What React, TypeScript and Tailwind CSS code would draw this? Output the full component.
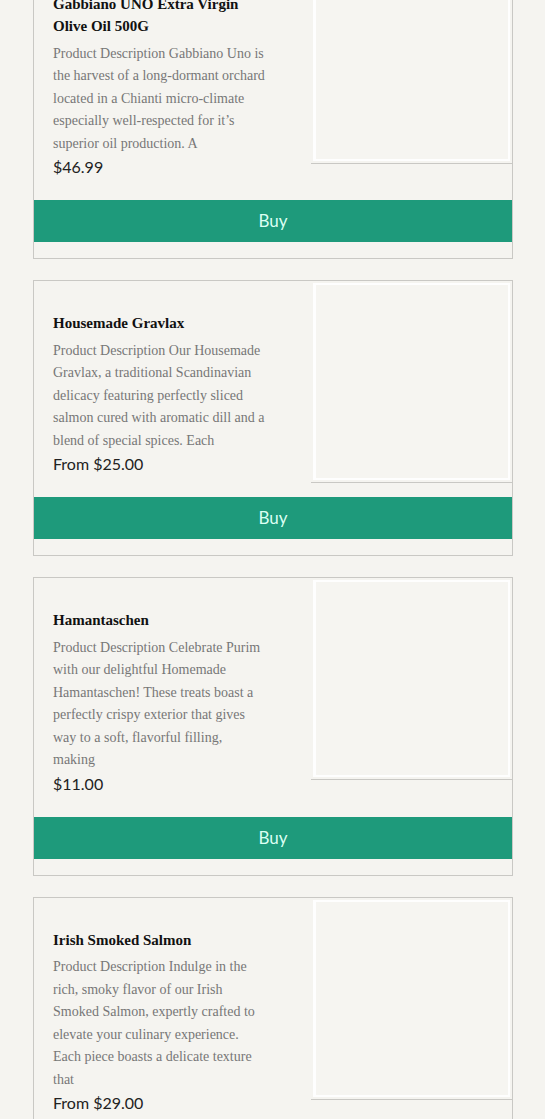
const products = [
  {
    title: "Gabbiano UNO Extra Virgin Olive Oil 500G",
    description:
      "Product Description Gabbiano Uno is the harvest of a long-dormant orchard located in a Chianti micro-climate especially well-respected for it’s superior oil production. A",
    price: "$46.99",
  },
  {
    title: "Housemade Gravlax",
    description:
      "Product Description Our Housemade Gravlax, a traditional Scandinavian delicacy featuring perfectly sliced salmon cured with aromatic dill and a blend of special spices. Each",
    price: "From $25.00",
  },
  {
    title: "Hamantaschen",
    description:
      "Product Description Celebrate Purim with our delightful Homemade Hamantaschen! These treats boast a perfectly crispy exterior that gives way to a soft, flavorful filling, making",
    price: "$11.00",
  },
  {
    title: "Irish Smoked Salmon",
    description:
      "Product Description Indulge in the rich, smoky flavor of our Irish Smoked Salmon, expertly crafted to elevate your culinary experience. Each piece boasts a delicate texture that",
    price: "From $29.00",
  },
];

type Product = (typeof products)[number];

const ProductCard = ({ product }: { product: Product }) => (
  <div className="border border-[#c9c8c4] bg-[#f5f4f0] pb-4">
    <div className="flex items-start">
      <div className="w-[277px] shrink-0 pl-[19px] pr-[45px] pt-[31px] pb-[21px]">
        <h3 className="font-['Liberation_Serif',serif] text-[15px] font-bold leading-[22px] text-[#111]">
          {product.title}
        </h3>
        <p className="mt-[5.5px] font-['Liberation_Serif',serif] text-[14px] leading-[22.5px] text-[#777]">
          {product.description}
        </p>
        <p className="font-['Lato',sans-serif] text-[16px] leading-[24px] text-[#222]">
          {product.price}
        </p>
      </div>
      <div className="h-[202px] flex-1 border-b border-[#c9c8c4] p-[2px]">
        <div className="h-full w-full border-2 border-l-[3px] border-white/90 bg-[#f6f5f1]" />
      </div>
    </div>
    <button className="flex h-[42px] w-full items-center justify-center bg-[#1e9a7b] font-['Lato',sans-serif] text-[17px] text-[#dcfff3]">
      Buy
    </button>
  </div>
);

export default function App() {
  return (
    <div className="min-h-screen overflow-hidden bg-[#f5f4f0]">
      <div className="-mt-[39px] ml-[33px] flex w-[480px] flex-col gap-[21px]">
        {products.map((p) => (
          <ProductCard key={p.title} product={p} />
        ))}
      </div>
    </div>
  );
}
